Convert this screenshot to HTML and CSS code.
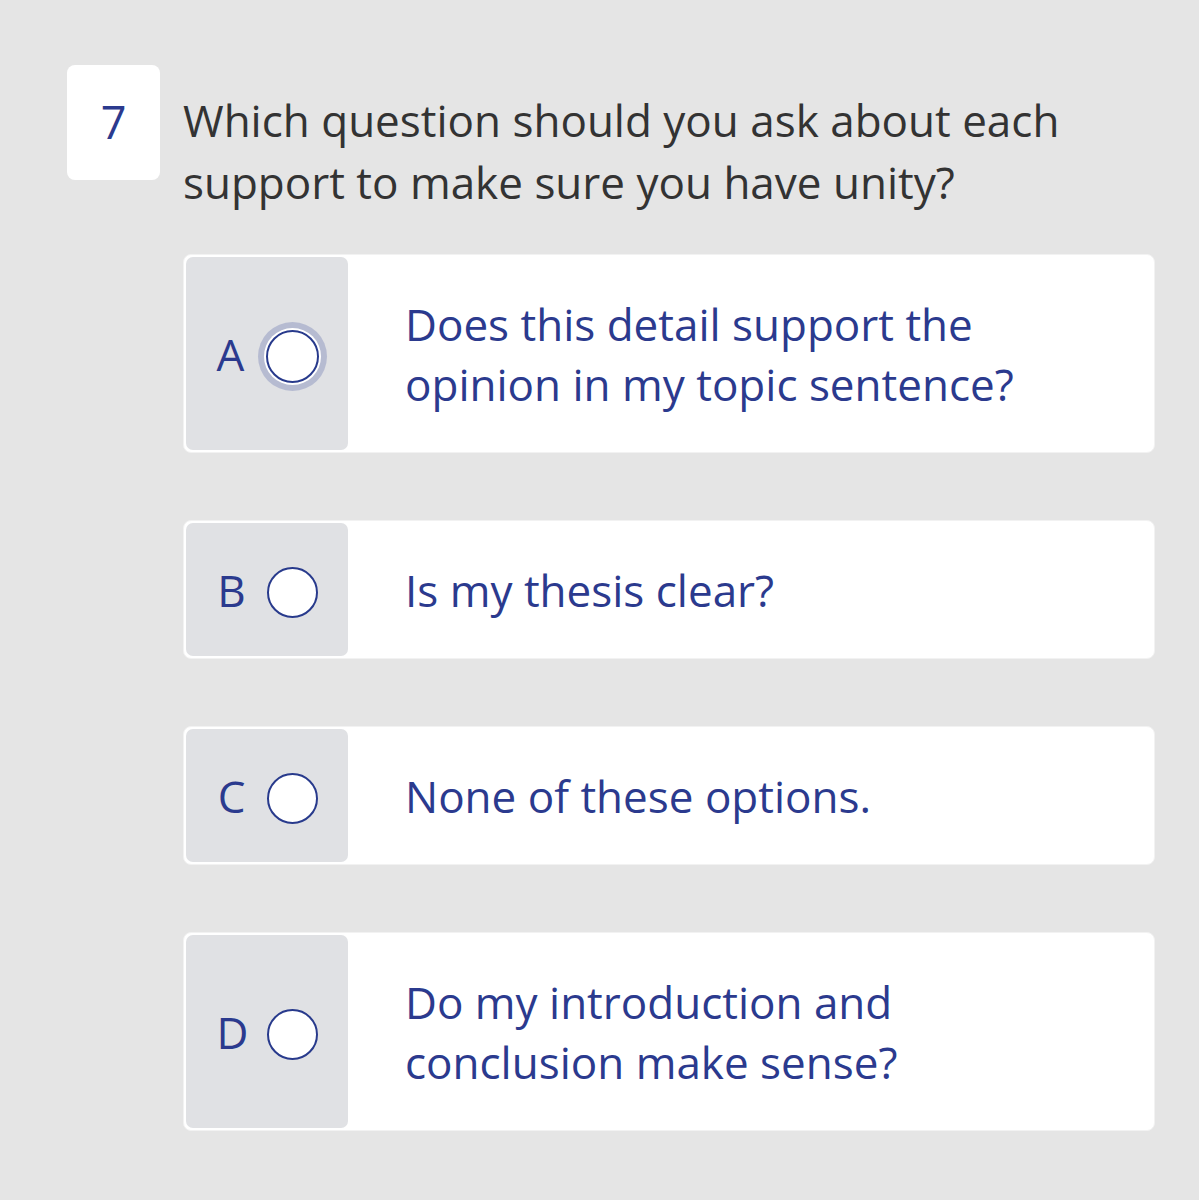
FILE: index.html
```html
<!DOCTYPE html>
<html>
<head>
<meta charset="utf-8">
<link rel="stylesheet" href="styles.css">
</head>
<body>
<div class="page">
  <div class="question">
    <div class="qnum">7</div>
    <div class="qtext">Which question should you ask about each support to make sure you have unity?</div>
  </div>
  <div class="options">
    <div class="option">
      <div class="choice"><span class="letter">A</span><span class="radio focused"></span></div>
      <div class="otext">Does this detail support the opinion in my topic sentence?</div>
    </div>
    <div class="option">
      <div class="choice"><span class="letter">B</span><span class="radio"></span></div>
      <div class="otext">Is my thesis clear?</div>
    </div>
    <div class="option">
      <div class="choice"><span class="letter">C</span><span class="radio"></span></div>
      <div class="otext">None of these options.</div>
    </div>
    <div class="option">
      <div class="choice"><span class="letter">D</span><span class="radio"></span></div>
      <div class="otext">Do my introduction and conclusion make sense?</div>
    </div>
  </div>
</div>
</body>
</html>
```
FILE: styles.css
```css
html, body {
  margin: 0;
  padding: 0;
  background: #e5e5e5;
}
body {
  font-family: "Open Sans", "Noto Sans", sans-serif;
}
.page {
  padding: 65px 44px 0 67px;
  width: 1199px;
  box-sizing: border-box;
}
.question {
  display: flex;
  align-items: flex-start;
  gap: 23px;
}
.qnum {
  width: 93px;
  height: 115px;
  flex: none;
  background: #fff;
  border-radius: 8px;
  color: #2b3a8e;
  font-size: 45px;
  display: flex;
  align-items: center;
  justify-content: center;
  box-sizing: border-box;
  padding-bottom: 2px;
}
.qtext {
  color: #333;
  font-size: 44px;
  line-height: 62px;
  padding-top: 24px;
}
.options {
  margin-left: 116px;
  margin-top: 41px;
  display: flex;
  flex-direction: column;
  gap: 67px;
}
.option {
  display: flex;
  background: #fff;
  border: 1px solid #f2f2f2;
  border-radius: 8px;
  padding: 2px;
}
.choice {
  width: 162px;
  flex: none;
  background: #e0e1e4;
  border-radius: 7px;
  display: flex;
  align-items: center;
  justify-content: center;
  gap: 20px;
  box-sizing: border-box;
}
.letter {
  color: #2b3a8e;
  font-size: 44px;
  width: 30px;
  text-align: center;
}
.radio {
  width: 51px;
  height: 51px;
  flex: none;
  margin-top: 6px;
  box-sizing: border-box;
  border: 2.5px solid #283a8c;
  border-radius: 50%;
  background: #fff;
}
.radio.focused {
  box-shadow: 0 0 0 2px #fff, 0 0 0 8px #b6bbd1;
  width: 53px;
  height: 53px;
}
.otext {
  color: #2b3a8e;
  font-size: 44px;
  line-height: 60px;
  padding: 36.5px 0 36.5px 57px;
  max-width: 650px;
}
```
